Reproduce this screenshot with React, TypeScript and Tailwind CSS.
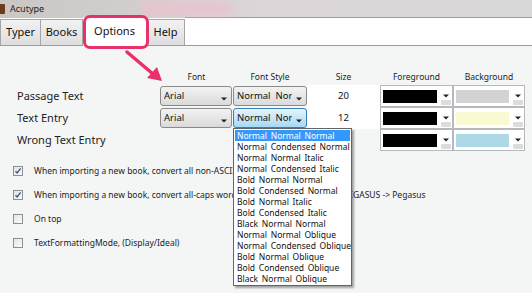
import React from "react";

const styles = [
  "Normal Normal Normal",
  "Normal Condensed Normal",
  "Normal Normal Italic",
  "Normal Condensed Italic",
  "Bold Normal Normal",
  "Bold Condensed Normal",
  "Bold Normal Italic",
  "Bold Condensed Italic",
  "Black Normal Normal",
  "Normal Normal Oblique",
  "Normal Condensed Oblique",
  "Bold Normal Oblique",
  "Bold Condensed Oblique",
  "Black Normal Oblique",
];

const Caret = () => (
  <svg width="6" height="4" viewBox="0 0 6 4" className="shrink-0">
    <path d="M0 0.5 L6 0.5 L3 3.5 Z" fill="#222" />
  </svg>
);

const Combo = ({ text, active }: { text: string; active?: boolean }) => (
  <div
    className={`flex h-full items-start gap-[4px] rounded-[3px] border pl-[3px] pr-[4px] pt-[3px] ${
      active
        ? "border-[#3c7fb1] bg-gradient-to-b from-[#e5f4fc] to-[#a7d9f5]"
        : "border-[#8a8a8a] bg-gradient-to-b from-[#f3f3f3] to-[#dadada]"
    }`}
  >
    <span className="flex-1 overflow-hidden whitespace-pre text-[9.5px] leading-[12px] text-[#111]">{text}</span>
    <div className="mt-[7px]">
      <Caret />
    </div>
  </div>
);

const ColorCombo = ({ color }: { color: string }) => (
  <div className="flex h-full border border-[#b5b8bd] bg-white">
    <div className="flex flex-1 items-center px-[2px]">
      <div className="h-[13px] w-full" style={{ backgroundColor: color }} />
    </div>
    <div className="flex w-[13px] flex-col items-center justify-between py-[1px]">
      <div className="mt-[7px]">
        <Caret />
      </div>
      <div className="h-[5px] w-[10px] rounded-[1px] bg-[#dcdcdc]" />
    </div>
  </div>
);

const Check = ({ checked }: { checked?: boolean }) => (
  <div className="flex h-[10px] w-[10px] shrink-0 items-center justify-center border border-[#8e8f8f] bg-gradient-to-br from-[#e6e6e6] to-[#fafafa]">
    {checked && (
      <svg width="8" height="8" viewBox="0 0 8 8">
        <path d="M1.5 4.2 L3.2 6 L6.6 1.4" fill="none" stroke="#3a5a8c" strokeWidth="1.4" />
      </svg>
    )}
  </div>
);

const rows = [
  { label: "Passage Text", font: true, size: "20", bg: "#d3d3d3" },
  { label: "Text Entry", font: true, size: "12", bg: "#fafad2", active: true },
  { label: "Wrong Text Entry", font: false, size: "", bg: "#add8e6" },
];

const options = [
  { text: "When importing a new book, convert all non-ASCII chars", checked: true },
  {
    text: "When importing a new book, convert all-caps words to title case, for example PEGASUS -> Pegasus",
    checked: true,
  },
  { text: "On top" },
  { text: "TextFormattingMode, (Display/Ideal)" },
];

export default function App() {
  return (
    <div className="relative h-[293px] w-[532px] overflow-hidden bg-[#f4f6f6] font-['Noto_Sans',sans-serif] text-[#111]">
      {/* title bar */}
      <div className="flex h-[18px] items-center gap-[5px] bg-gradient-to-r from-[#c9c6c4] via-[#ddd6d8] to-[#d8d8d8]">
        <div className="h-[10px] w-[5px] rounded-r-[1px] bg-[#6b3b1c]" />
        <span className="text-[9px] text-[#222]">Acutype</span>
        <div className="ml-[92px] h-[12px] w-[90px] rounded bg-[#e7c4cf] blur-[3px]" />
      </div>

      {/* tabs */}
      <div className="flex h-[28px] items-end border-b border-[#9c9c9c] bg-white">
        <div className="flex h-[26px] w-[41px] items-center justify-center border border-b-0 border-[#a6a6a6] bg-gradient-to-b from-[#f2f2f2] to-[#dedede] text-[11px]">
          Typer
        </div>
        <div className="flex h-[26px] w-[42px] items-center justify-center border border-b-0 border-l-0 border-[#a6a6a6] bg-gradient-to-b from-[#f2f2f2] to-[#dedede] text-[11px]">
          Books
        </div>
        <div className="-mb-[1px] flex h-[29px] w-[63px] items-center justify-center bg-white text-[11px]">
          Options
        </div>
        <div className="flex h-[26px] w-[39px] items-center justify-center border border-b-0 border-[#a6a6a6] bg-gradient-to-b from-[#f2f2f2] to-[#dedede] text-[11px]">
          Help
        </div>
        <div className="h-[28px] flex-1 border-t border-[#9c9c9c]" />
      </div>

      {/* column headers */}
      <div className="mt-[23px] flex h-[16px] items-center text-[8.5px] text-[#222]">
        <div className="w-[160px]" />
        <div className="w-[73px] text-center">Font</div>
        <div className="w-[74px] text-center">Font Style</div>
        <div className="w-[73px] text-center">Size</div>
        <div className="w-[73px] text-center">Foreground</div>
        <div className="w-[72px] text-center">Background</div>
      </div>

      {/* rows */}
      <div className="flex flex-col">
        {rows.map((r) => (
          <div key={r.label} className="flex h-[22px] items-center">
            <div className="w-[160px] pl-[17px] text-[11px] text-[#222]">{r.label}</div>
            <div className="h-full w-[73px] py-[1px] pr-[1px]">{r.font && <Combo text="Arial" />}</div>
            <div className="h-full w-[74px] py-[1px]">
              {r.font && <Combo text="Normal  Normal" active={r.active} />}
            </div>
            <div className="flex h-full w-[73px] items-center justify-center">
              {r.size && (
                <div className="flex h-full w-full items-center justify-center bg-white text-[9.5px]">{r.size}</div>
              )}
            </div>
            <div className="h-full w-[73px]">
              <ColorCombo color="#000000" />
            </div>
            <div className="h-full w-[72px]">
              <ColorCombo color={r.bg} />
            </div>
          </div>
        ))}
      </div>

      {/* options */}
      <div className="mt-[8px] flex flex-col">
        {options.map((o) => (
          <div key={o.text} className="flex h-[24px] items-center gap-[11px] pl-[13px]">
            <Check checked={o.checked} />
            <span className="whitespace-nowrap text-[8.5px] text-[#222]">{o.text}</span>
          </div>
        ))}
      </div>

      {/* open dropdown list */}
      <div className="absolute left-[233px] top-[128px] w-[119px] border border-[#646464] bg-white p-[1px] shadow-[2px_2px_2px_rgba(0,0,0,0.35)]">
        {styles.map((s, i) => (
          <div
            key={s}
            className={`h-[11px] whitespace-nowrap pl-[2px] text-[8.5px] leading-[11px] [word-spacing:1.5px] ${
              i === 0 ? "bg-[#3399ff] text-white" : "text-[#111]"
            }`}
          >
            {s}
          </div>
        ))}
      </div>

      {/* highlight annotation */}
      <div className="absolute left-[83px] top-[15px] h-[34px] w-[66px] rounded-[7px] border-[3px] border-[#e8306a]" />
      <svg className="absolute left-0 top-0" width="532" height="293">
        <line x1="127" y1="52" x2="153" y2="74" stroke="#e8306a" strokeWidth="3.5" strokeLinecap="round" />
        <path d="M162 81 L147 78 L157 67 Z" fill="#e8306a" />
      </svg>
    </div>
  );
}
